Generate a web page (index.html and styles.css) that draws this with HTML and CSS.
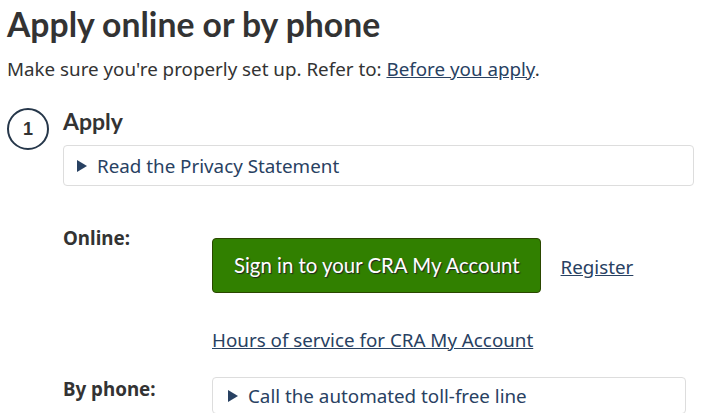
FILE: index.html
```html
<!DOCTYPE html>
<html lang="en">
<head>
<meta charset="utf-8">
<title>Apply online or by phone</title>
<link rel="stylesheet" href="styles.css">
</head>
<body>
<main class="page">
  <h1 class="title">Apply online or by phone</h1>
  <p class="intro">Make sure you're properly set up. Refer to: <a href="#">Before you apply</a>.</p>

  <section class="step">
    <div class="step-num">1</div>
    <div class="step-body">
      <h2 class="step-title">Apply</h2>
      <div class="details"><span class="tri"></span>Read the Privacy Statement</div>

      <div class="row row-online">
        <div class="label">Online:</div>
        <div class="content">
          <div class="btn-line">
            <a class="btn" href="#">Sign in to your CRA My Account</a>
            <a class="reg" href="#">Register</a>
          </div>
          <a class="hours" href="#">Hours of service for CRA My Account</a>
        </div>
      </div>

      <div class="row row-phone">
        <div class="label">By phone:</div>
        <div class="content">
          <div class="details details-phone"><span class="tri"></span>Call the automated toll-free line</div>
        </div>
      </div>
    </div>
  </section>
</main>
</body>
</html>
```
FILE: styles.css
```css
* { box-sizing: border-box; }
html, body { margin: 0; padding: 0; background: #fff; }
body {
  font-family: "Noto Sans", sans-serif;
  color: #333;
  font-size: 18.8px;
  overflow: hidden;
}
a { color: #284162; text-decoration: underline; }
.page { padding: 0 7px; }
.title {
  font-family: Lato, sans-serif;
  font-weight: 700;
  font-size: 33.7px;
  line-height: 40px;
  margin: 4px 0 0;
  color: #333;
}
.intro {
  margin: 11px 0 0;
  line-height: 28px;
}
.step {
  display: flex;
  gap: 14px;
  margin-top: 23px;
}
.step-num {
  flex: none;
  width: 42px;
  height: 42px;
  border: 2px solid #26374a;
  border-radius: 50%;
  display: flex;
  align-items: center;
  justify-content: center;
  font-family: "Liberation Sans", Arial, sans-serif;
  font-weight: 700;
  font-size: 18px;
  color: #333;
  margin-top: 2px;
}
.step-body { flex: 1; min-width: 0; }
.step-title {
  font-family: Lato, sans-serif;
  font-weight: 700;
  font-size: 23px;
  line-height: 30px;
  margin: 0 0 9px;
}
.details {
  border: 1px solid #ddd;
  border-radius: 4px;
  height: 41px;
  display: flex;
  align-items: center;
  padding-left: 13px;
  color: #284162;
  line-height: 24px;
}
.tri {
  width: 0; height: 0;
  border-left: 10px solid #284162;
  border-top: 6px solid transparent;
  border-bottom: 6px solid transparent;
  margin-right: 10px;
}
.row { display: flex; }
.label {
  width: 149px;
  flex: none;
  font-weight: 700;
  line-height: 24px;
}
.row-online { margin-top: 40px; }
.content { flex: 1; min-width: 0; }
.btn-line { display: flex; align-items: center; gap: 20px; margin-top: 12px; }
.btn {
  display: inline-block;
  background: #318000;
  border: 1px solid #2b4700;
  border-radius: 4px;
  color: #fff;
  text-decoration: none;
  font-family: Lato, sans-serif;
  font-size: 20.4px;
  line-height: 24px;
  padding: 14px 20px 15px 21px;
  text-shadow: 1px 1px 1px #222;
}
.reg { line-height: 24px; margin-top: 3px; }
.hours {
  display: inline-block;
  margin-top: 35px;
  line-height: 24px;
}
.row-phone { margin-top: 24px; }
.details-phone { height: 37px; padding-left: 15px; margin-right: 8px; }
.details-phone .tri { margin-right: 10px; }
```
